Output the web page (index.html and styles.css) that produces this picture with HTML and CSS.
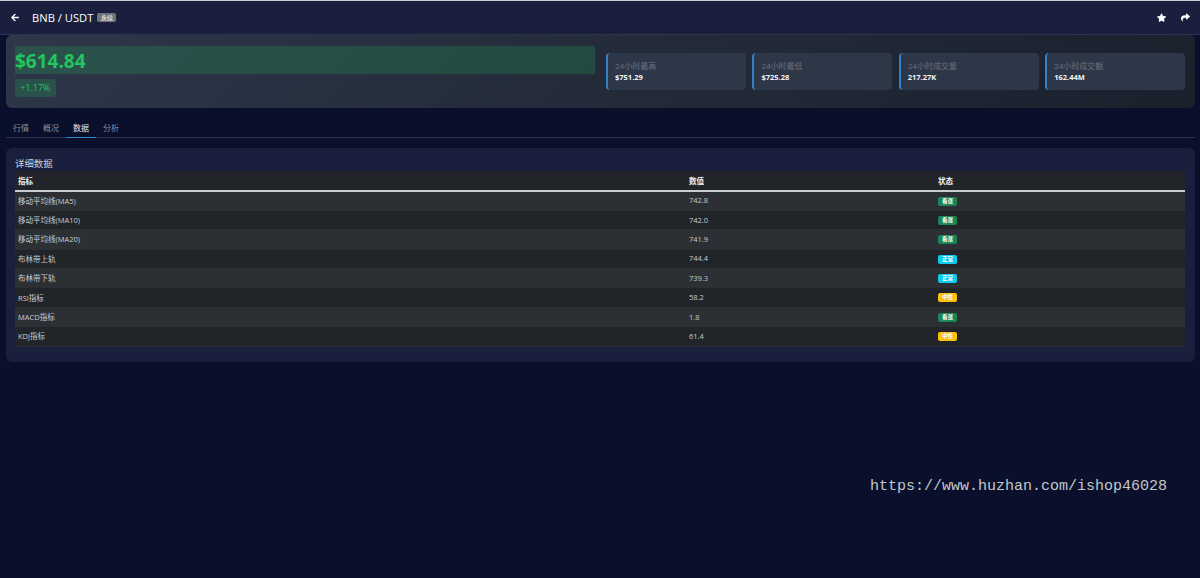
FILE: index.html
```html
<!DOCTYPE html>
<html lang="zh-CN">
<head>
    <meta charset="UTF-8">
    <title>BNB / USDT</title>
    <link rel="stylesheet" href="styles.css">
</head>
<body>

<header class="navbar">
    <div class="nav-left">
        <svg class="icon back" viewBox="0 0 448 512"><path d="M257 445 l-22 22c-9 9-24 9-33 0L7 273c-9-9-9-24 0-33L202 45c9-9 24-9 33 0l22 22c9 9 9 25 0 34L136 216h288c13 0 24 11 24 24v32c0 13-11 24-24 24H136l121 115c10 9 10 25 0 34z"/></svg>
        <h1>BNB / USDT</h1>
        <span class="tag">永续</span>
    </div>
    <div class="nav-right">
        <svg class="icon" viewBox="0 0 576 512"><path d="M259 18 194 160 41 179c-26 4-37 36-18 55l111 108-26 153c-5 27 24 48 48 35l137-72 137 72c24 13 53-8 48-35l-26-153 111-108c19-19 8-51-18-55l-153-19L317 18c-12-24-46-24-58 0z"/></svg>
        <svg class="icon" viewBox="0 0 512 512"><path d="M503 183 327 31c-15-13-39-3-39 18v80C127 131 0 163 0 315c0 61 39 122 83 154 14 10 33-3 28-19-45-144 21-182 177-184v88c0 21 24 31 39 18l176-152c11-10 11-27 0-37z"/></svg>
    </div>
</header>

<section class="price-card">
    <div class="price-main">
        <div class="price">$614.84</div>
        <span class="change">+1.17%</span>
    </div>
    <div class="stats">
        <div class="stat">
            <div class="stat-label">24小时最高</div>
            <div class="stat-value">$751.29</div>
        </div>
        <div class="stat">
            <div class="stat-label">24小时最低</div>
            <div class="stat-value">$725.28</div>
        </div>
        <div class="stat">
            <div class="stat-label">24小时成交量</div>
            <div class="stat-value">217.27K</div>
        </div>
        <div class="stat">
            <div class="stat-label">24小时成交额</div>
            <div class="stat-value">162.44M</div>
        </div>
    </div>
</section>

<nav class="tabs">
    <a href="#">行情</a>
    <a href="#">概况</a>
    <a href="#" class="active">数据</a>
    <a href="#">分析</a>
</nav>

<section class="panel">
    <h2>详细数据</h2>
    <table class="data-table">
        <thead>
            <tr><th class="col-name">指标</th><th class="col-value">数值</th><th>状态</th></tr>
        </thead>
        <tbody>
            <tr><td>移动平均线(MA5)</td><td>742.8</td><td><span class="badge up">看涨</span></td></tr>
            <tr><td>移动平均线(MA10)</td><td>742.0</td><td><span class="badge up">看涨</span></td></tr>
            <tr><td>移动平均线(MA20)</td><td>741.9</td><td><span class="badge up">看涨</span></td></tr>
            <tr><td>布林带上轨</td><td>744.4</td><td><span class="badge normal">正常</span></td></tr>
            <tr><td>布林带下轨</td><td>739.3</td><td><span class="badge normal">正常</span></td></tr>
            <tr><td>RSI指标</td><td>58.2</td><td><span class="badge neutral">中性</span></td></tr>
            <tr><td>MACD指标</td><td>1.8</td><td><span class="badge up">看涨</span></td></tr>
            <tr><td>KDJ指标</td><td>61.4</td><td><span class="badge neutral">中性</span></td></tr>
        </tbody>
    </table>
</section>

<div class="watermark">https://www.huzhan.com/ishop46028</div>

</body>
</html>
```

FILE: styles.css
```css
* {
    box-sizing: border-box;
}
html, body {
    height: 100%;
}
body {
    margin: 0;
    overflow: hidden;
    background-color: #0a0f2b;
    color: #e2e6ee;
    font-family: "Open Sans", "Noto Sans CJK SC", sans-serif;
    border-top: 1px solid #c9ccd4;
}
.navbar {
    height: 34px;
    padding: 0 10px 0 11px;
    display: flex;
    justify-content: space-between;
    align-items: center;
    background-color: #1a1f3d;
    border-bottom: 1px solid #2c3350;
}
.nav-left, .nav-right {
    display: flex;
    align-items: center;
}
.nav-right {
    gap: 15px;
}
.icon {
    width: 9px;
    height: 9px;
    fill: #fff;
}
.back {
    width: 8px;
    margin-right: 13px;
}
.navbar h1 {
    margin: 0 4px 0 0;
    font-size: 11.2px;
    font-weight: 500;
    color: #fff;
}
.tag {
    padding: 1.5px 3.5px;
    font-size: 6px;
    line-height: 6px;
    color: #fff;
    background-color: #6c757d;
    border-radius: 2px;
}
.price-card {
    margin: 0 5px 0 6px;
    height: 73px;
    padding: 11px 9px;
    display: flex;
    gap: 11px;
    background: linear-gradient(135deg, #2d3748, #1a202c);
    border-radius: 6px;
}
.price-main {
    width: 580px;
}
.price {
    height: 28px;
    font-size: 19px;
    line-height: 31px;
    font-weight: 700;
    color: #22c55e;
    background-color: rgba(34, 197, 94, 0.2);
}
.change {
    display: inline-block;
    margin-top: 5px;
    padding: 0 5.5px;
    height: 18px;
    font-size: 8.8px;
    line-height: 18px;
    color: #22c55e;
    background-color: rgba(34, 197, 94, 0.2);
    border-radius: 3px;
}
.stats {
    flex: 1;
    display: flex;
    gap: 6.5px;
    align-items: center;
    padding-right: 1px;
}
.stat {
    flex: 1;
    height: 37px;
    padding: 7px 7px;
    background-color: #2d3748;
    border-left: 2px solid #3182ce;
    border-radius: 4px;
}
.stat-label {
    font-size: 8px;
    line-height: 12px;
    color: #6b7280;
}
.stat-value {
    font-size: 7.5px;
    line-height: 10px;
    font-weight: 700;
    color: #f3f4f6;
}
.tabs {
    margin: 10px 5px 0 6px;
    height: 20px;
    display: flex;
    border-bottom: 1px solid #2c3350;
}
.tabs a {
    width: 30px;
    text-align: center;
    font-size: 8px;
    line-height: 19px;
    color: #8a8f9e;
    text-decoration: none;
}
.tabs a.active {
    color: #e2e6ee;
    border-bottom: 1px solid #3182ce;
    height: 20px;
}
.panel {
    margin: 10px 5px 0 6px;
    height: 214px;
    padding: 9px 10px 0 9px;
    background-color: #1a1f3d;
    border-radius: 6px;
}
.panel h2 {
    margin: 0;
    height: 14px;
    font-size: 9.4px;
    line-height: 13px;
    font-weight: 400;
    color: #cfd2d9;
}
.data-table {
    width: 100%;
    border-collapse: collapse;
    table-layout: fixed;
    font-size: 7.5px;
    color: #c8ccd2;
}
.data-table th {
    height: 20px;
    padding: 0 3px;
    text-align: left;
    font-weight: 700;
    color: #f2f3f5;
    background-color: #212529;
    border-bottom: 2px solid #c9ccd0;
}
.col-name {
    width: 671px;
}
.col-value {
    width: 249px;
}
.data-table td {
    height: 19.4px;
    padding: 0 3px 1px;
    background-color: #212529;
    border-bottom: 1px solid #2b2f34;
}
.data-table tbody tr:nth-child(odd) td {
    background-color: #2c3034;
}
.badge {
    display: inline-block;
    width: 19px;
    height: 9px;
    font-size: 5.5px;
    line-height: 9px;
    font-weight: 700;
    text-align: center;
    color: #fff;
    border-radius: 2px;
    vertical-align: middle;
}
.up {
    background-color: #198754;
}
.normal {
    background-color: #0dcaf0;
}
.neutral {
    background-color: #ffc107;
}
.watermark {
    position: absolute;
    left: 870px;
    top: 477px;
    font-family: "Liberation Mono", monospace;
    font-size: 15px;
    line-height: 20px;
    color: #c4c6cc;
    white-space: nowrap;
}
```
